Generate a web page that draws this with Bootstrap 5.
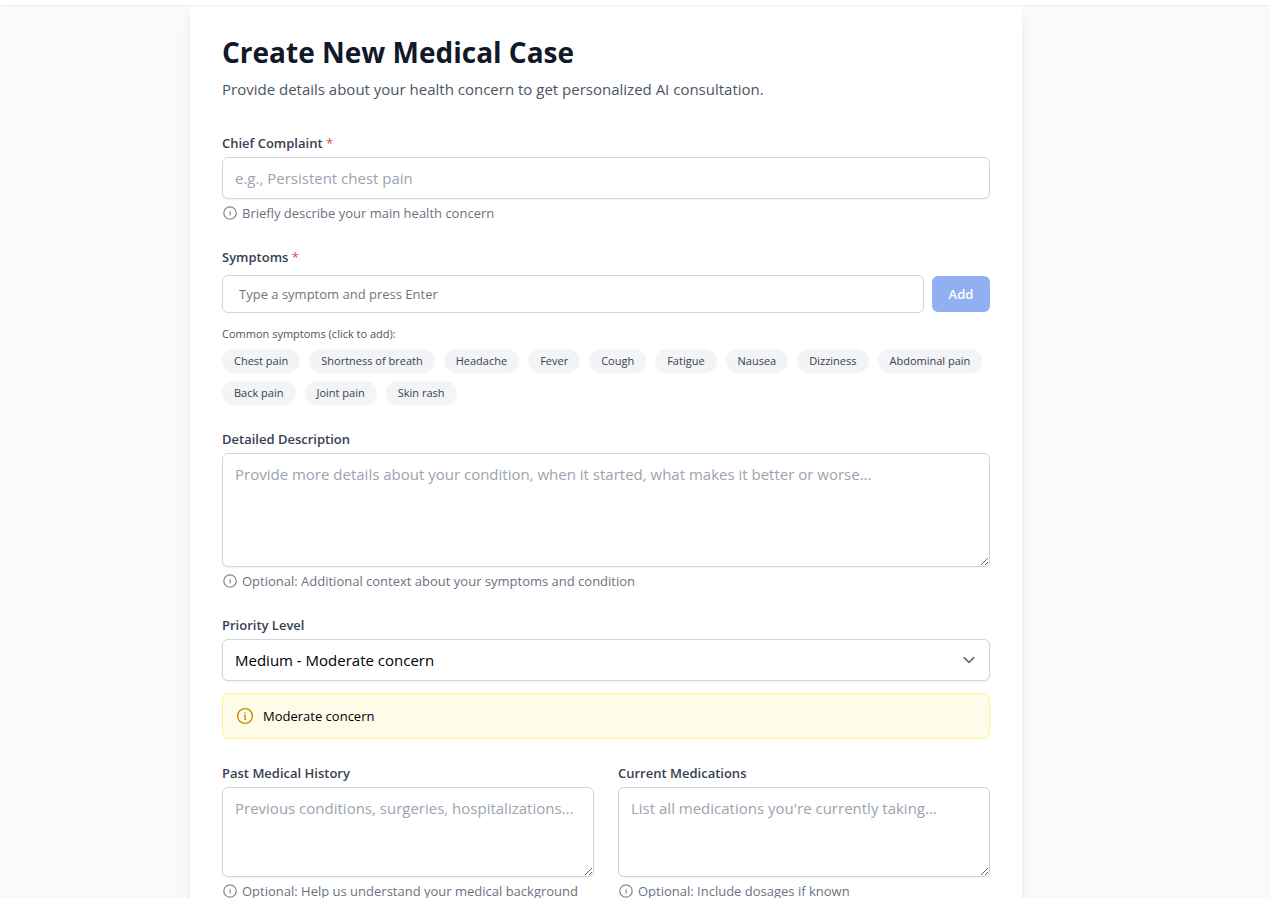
<!DOCTYPE html>
<html lang="en">
<head>
<meta charset="utf-8">
<meta name="viewport" content="width=device-width, initial-scale=1">
<title>Create New Medical Case</title>
<link href="https://cdn.jsdelivr.net/npm/bootstrap@5.3.0/dist/css/bootstrap.min.css" rel="stylesheet">
<style>
  body { font-family: "Open Sans", "Noto Sans", sans-serif; font-size: 15px; line-height: 24px; background: #f9fafb; color: #111827; }
  .site-bar { height: 5px; background: #fff; box-shadow: 0 1px 2px rgba(0,0,0,.05); }
  .page-shell { padding-right: 58px; }
  .case-panel { max-width: 832px; padding: 29px 32px 32px; background: #fff; box-shadow: 0 10px 15px -3px rgba(0,0,0,.1), 0 4px 6px -4px rgba(0,0,0,.1); }
  h1 { font-size: 28px; line-height: 36px; font-weight: 700; margin-bottom: 7px; }
  .intro { color: #4b5563; margin-bottom: 32px; }
  .field-stack { gap: 24px; }
  .form-label { display: block; font-size: 13px; line-height: 20px; font-weight: 600; color: #374151; margin-bottom: 4px; }
  .required { color: #ef4444; font-weight: 400; }
  .form-control, .form-select { font-size: 15px; line-height: 24px; padding: 8px 12px; border: 1px solid #d1d5db; border-radius: 6px; box-shadow: 0 1px 2px rgba(0,0,0,.05); color: #000; }
  .form-control::placeholder { color: #9ca3af; }
  textarea.form-control { display: block; resize: vertical; }
  .form-select { background-image: url("data:image/svg+xml,%3csvg xmlns='http://www.w3.org/2000/svg' fill='none' viewBox='0 0 20 20'%3e%3cpath stroke='%236b7280' stroke-linecap='round' stroke-linejoin='round' stroke-width='1.5' d='M6 8l4 4 4-4'/%3e%3c/svg%3e"); background-size: 24px; background-position: right 8px center; }
  .symptom-box { font-size: 13px; line-height: 20px; padding: 8px 16px; box-shadow: none; }
  .symptom-box::placeholder { color: #757575; }
  .btn-add { font-size: 13px; line-height: 20px; font-weight: 600; padding: 8px 16px; min-width: 58px; border: 0; border-radius: 6px; color: #fff; background: #2563eb; }
  .btn-add:disabled { color: #fff; background: #2563eb; opacity: .5; }
  .help { font-size: 13px; line-height: 20px; color: #6b7280; margin-top: 4px; gap: 4px; }
  .help svg { color: #848b98; }
  .common { font-size: 11px; line-height: 16px; color: #4b5563; margin: 13px 0 7px; }
  .chips { gap: 8px 9px; }
  .chip { font-size: 11px; line-height: 16px; padding: 4px 12px; border: 0; border-radius: 12px; color: #374151; background: #f3f4f6; }
  .notice { font-size: 13px; line-height: 20px; padding: 12px; gap: 8px; margin-top: 12px; border: 1px solid #fef08a; border-radius: 6px; background: #fefce8; color: #000; }
</style>
</head>
<body>
<svg class="d-none" aria-hidden="true">
  <symbol id="info-small" viewBox="0 0 16 16"><circle cx="8" cy="8" r="6.2" fill="none" stroke="currentColor" stroke-width="1.3"/><path fill="none" stroke="currentColor" stroke-width="1.1" d="M7.3 7.8H8.2V10.4M7.5 6.2H8.6"/></symbol>
</svg>
<header class="site-bar sticky-top"></header>
<div class="page-shell">
  <main class="case-panel mx-auto">
    <h1>Create New Medical Case</h1>
    <p class="intro">Provide details about your health concern to get personalized AI consultation.</p>
    <form class="field-stack d-flex flex-column">
      <div>
        <label class="form-label" for="complaint">Chief Complaint <span class="required">*</span></label>
        <input class="form-control" id="complaint" type="text" placeholder="e.g., Persistent chest pain">
        <div class="help d-flex align-items-center"><svg width="16" height="16"><use href="#info-small"/></svg><span>Briefly describe your main health concern</span></div>
      </div>
      <div>
        <label class="form-label mb-2" for="symptom">Symptoms <span class="required">*</span></label>
        <div class="d-flex align-items-center gap-2">
          <input class="form-control symptom-box" id="symptom" type="text" placeholder="Type a symptom and press Enter">
          <button class="btn btn-add" type="button" disabled>Add</button>
        </div>
        <p class="common">Common symptoms (click to add):</p>
        <div class="chips d-flex flex-wrap">
          <button class="chip" type="button">Chest pain</button>
          <button class="chip" type="button">Shortness of breath</button>
          <button class="chip" type="button">Headache</button>
          <button class="chip" type="button">Fever</button>
          <button class="chip" type="button">Cough</button>
          <button class="chip" type="button">Fatigue</button>
          <button class="chip" type="button">Nausea</button>
          <button class="chip" type="button">Dizziness</button>
          <button class="chip" type="button">Abdominal pain</button>
          <button class="chip" type="button">Back pain</button>
          <button class="chip" type="button">Joint pain</button>
          <button class="chip" type="button">Skin rash</button>
        </div>
      </div>
      <div>
        <label class="form-label" for="details">Detailed Description</label>
        <textarea class="form-control" id="details" rows="4" placeholder="Provide more details about your condition, when it started, what makes it better or worse..."></textarea>
        <div class="help d-flex align-items-center"><svg width="16" height="16"><use href="#info-small"/></svg><span>Optional: Additional context about your symptoms and condition</span></div>
      </div>
      <div>
        <label class="form-label" for="priority">Priority Level</label>
        <select class="form-select" id="priority">
          <option selected>Medium - Moderate concern</option>
        </select>
        <div class="notice d-flex align-items-center"><svg width="20" height="20" viewBox="0 0 20 20" color="#ca8a04"><circle cx="10" cy="10" r="7.4" fill="none" stroke="currentColor" stroke-width="1.4"/><path fill="none" stroke="currentColor" stroke-width="1.3" d="M8.8 9.3H10.1V13.3H11.2M9.4 6.8H10.7"/></svg><span>Moderate concern</span></div>
      </div>
      <div class="row">
        <div class="col-6">
          <label class="form-label" for="history">Past Medical History</label>
          <textarea class="form-control" id="history" rows="3" placeholder="Previous conditions, surgeries, hospitalizations..."></textarea>
          <div class="help d-flex align-items-center"><svg width="16" height="16"><use href="#info-small"/></svg><span>Optional: Help us understand your medical background</span></div>
        </div>
        <div class="col-6">
          <label class="form-label" for="medications">Current Medications</label>
          <textarea class="form-control" id="medications" rows="3" placeholder="List all medications you're currently taking..."></textarea>
          <div class="help d-flex align-items-center"><svg width="16" height="16"><use href="#info-small"/></svg><span>Optional: Include dosages if known</span></div>
        </div>
      </div>
    </form>
  </main>
</div>
<script src="https://cdn.jsdelivr.net/npm/bootstrap@5.3.0/dist/js/bootstrap.bundle.min.js"></script>
</body>
</html>
